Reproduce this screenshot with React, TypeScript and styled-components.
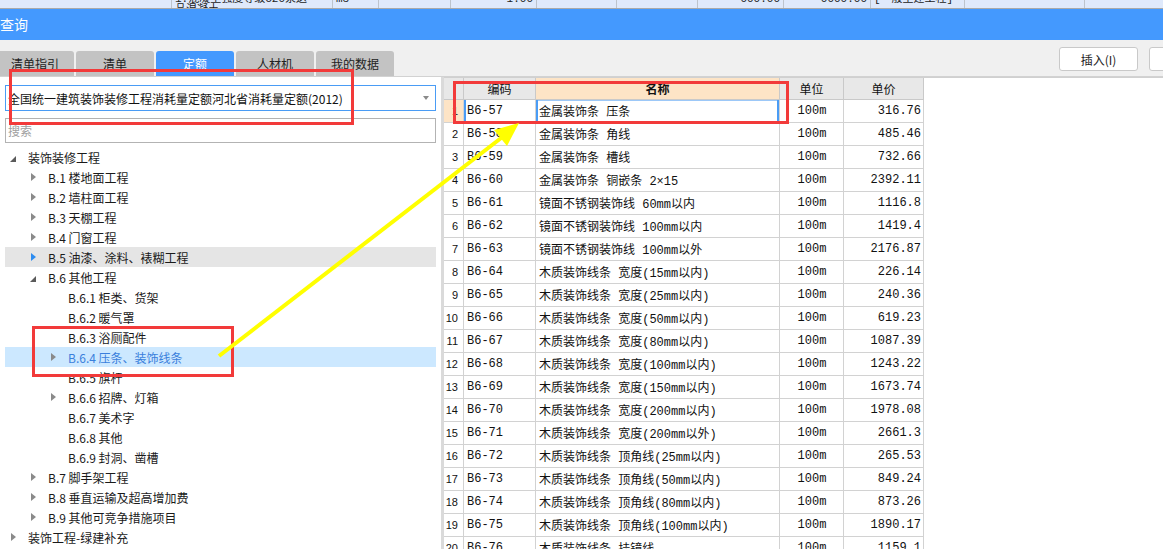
import React from 'react';
import styled, { createGlobalStyle } from 'styled-components';

type Twisty = 'open' | 'closed' | 'none';

type TreeItem = {
  level: number;
  label: string;
  twisty: Twisty;
  state?: 'hover' | 'selected';
};

type Quota = {
  code: string;
  name: string;
  unit: string;
  price: string;
};

const GlobalStyle = createGlobalStyle`
  html, body { margin: 0; padding: 0; background: #fff; }
  body { font-family: "Noto Sans CJK SC", sans-serif; }
  * { box-sizing: border-box; }
`;

const Screen = styled.div`
  position: relative;
  width: 1163px;
  height: 549px;
  overflow: hidden;
  display: flex;
  flex-direction: column;
  background: #fff;
  font-family: "Noto Sans CJK SC", sans-serif;
  font-size: 12px;
  color: #1a1a1a;
`;

/* strip of the grid behind the dialog */
const BackStrip = styled.div`
  height: 9px;
  flex-shrink: 0;
  display: flex;
  overflow: hidden;
  background: #dfe9fb;
  border-bottom: 1px solid #a9a9a9;
`;

const BackCell = styled.div<{ $w: number; $align?: string }>`
  width: ${(p) => p.$w}px;
  flex-shrink: 0;
  border-right: 1px solid #bcc3cc;
  padding: 0 3px;
  font-family: "Liberation Mono", "Noto Sans CJK SC", monospace;
  font-size: 11px;
  line-height: 11px;
  margin-top: -6px;
  text-align: ${(p) => p.$align || 'left'};
  white-space: nowrap;
  overflow: hidden;
  color: #222;
`;

const TitleBar = styled.div`
  height: 31px;
  flex-shrink: 0;
  display: flex;
  align-items: center;
  background: #4499fe;
  color: #fff;
  font-size: 14px;
  padding-bottom: 2px;
`;

const Toolbar = styled.div`
  height: 37px;
  flex-shrink: 0;
  display: flex;
  background: #f0f0f0;
  border-bottom: 1px solid #d2d2d2;
`;

const TabRow = styled.div`
  display: flex;
  gap: 2px;
  margin-left: -4px;
  align-self: flex-end;
`;

const Tab = styled.div<{ $active?: boolean }>`
  width: 78px;
  height: 25px;
  display: flex;
  align-items: center;
  justify-content: center;
  border-radius: 3px 3px 0 0;
  background: ${(p) => (p.$active ? '#4499fe' : '#c3c3c3')};
  color: ${(p) => (p.$active ? '#fff' : '#222')};
  font-size: 12px;
`;

const ButtonGroup = styled.div`
  margin-left: auto;
  width: 104px;
  margin-top: 7px;
  display: flex;
  gap: 11px;
  overflow: hidden;
  align-self: flex-start;
`;

const ToolButton = styled.div`
  width: 79px;
  height: 24px;
  flex-shrink: 0;
  display: flex;
  align-items: center;
  justify-content: center;
  background: #fff;
  border: 1px solid #c9c9c9;
  border-radius: 3px;
  font-size: 12px;
  color: #222;
`;

const Main = styled.div`
  flex: 1;
  min-height: 0;
  display: flex;
`;

const LeftPanel = styled.div`
  width: 441px;
  flex-shrink: 0;
  padding: 8px 5px 0 5px;
  display: flex;
  flex-direction: column;
`;

const Select = styled.div`
  width: 431px;
  height: 26px;
  flex-shrink: 0;
  display: flex;
  align-items: center;
  justify-content: space-between;
  padding: 0 6px 0 2px;
  border: 1px solid #4a9cf5;
  font-size: 12px;
  color: #111;
`;

const Caret = styled.span`
  width: 0;
  height: 0;
  border-style: solid;
  border-width: 4px 3.5px 0 3.5px;
  border-color: #8a8a8a transparent transparent transparent;
`;

const Search = styled.input`
  width: 431px;
  height: 25px;
  flex-shrink: 0;
  margin-top: 7px;
  border: 1px solid #b3b3b3;
  padding: 0 2px;
  outline: none;
  font-family: "Noto Sans CJK SC", sans-serif;
  font-size: 12px;
  &::placeholder {
    color: #a0a0a0;
  }
`;

const Tree = styled.div`
  margin-top: 4px;
  display: flex;
  flex-direction: column;
`;

const TreeRow = styled.div<{ $level: number; $state?: 'hover' | 'selected' }>`
  width: 431px;
  height: 20px;
  flex-shrink: 0;
  display: flex;
  align-items: center;
  padding-left: ${(p) => p.$level * 20}px;
  background: ${(p) =>
    p.$state === 'selected' ? '#cce8ff' : p.$state === 'hover' ? '#e5e5e5' : 'transparent'};
  color: ${(p) => (p.$state === 'selected' ? '#3a7fdc' : '#1a1a1a')};
  font-size: 12px;
  white-space: nowrap;
`;

const TwistyBox = styled.span`
  width: 16px;
  height: 20px;
  flex-shrink: 0;
  display: flex;
  align-items: center;
  justify-content: center;
`;

const Arrow = styled.span<{ $kind: Twisty; $blue?: boolean }>`
  width: 0;
  height: 0;
  border-style: solid;
  ${(p) =>
    p.$kind === 'open'
      ? 'border-width: 0 0 6px 6px; border-color: transparent transparent #5a5a5a transparent; margin-top: 3px;'
      : p.$kind === 'closed'
      ? `border-width: 4px 0 4px 5px; border-color: transparent transparent transparent ${
          p.$blue ? '#2d8cf0' : '#8a8a8a'
        };`
      : 'border-width: 0;'}
`;

const TreeLabel = styled.span`
  margin-left: 7px;
`;

const Splitter = styled.div`
  width: 3px;
  flex-shrink: 0;
  background: #dadada;
`;

const TablePanel = styled.div`
  flex: 1;
  border-top: 1px solid #d0d0d0;
  display: flex;
  flex-direction: column;
`;

const cols = '20px 72px 244px 64px 80px';

const HeadRow = styled.div`
  display: grid;
  grid-template-columns: ${cols};
  height: 22px;
  flex-shrink: 0;
`;

const HeadCell = styled.div<{ $active?: boolean }>`
  display: flex;
  align-items: center;
  justify-content: center;
  background: ${(p) => (p.$active ? '#fde4c6' : '#e8e8e8')};
  border-right: 1px solid #c9c9c9;
  border-bottom: 1px solid #c9c9c9;
  font-size: 12px;
  font-weight: ${(p) => (p.$active ? 700 : 400)};
  color: #111;
`;

const BodyRow = styled.div`
  display: grid;
  grid-template-columns: ${cols};
  height: 23px;
  flex-shrink: 0;
`;

const Cell = styled.div<{
  $align?: 'left' | 'center' | 'right';
  $bg?: string;
  $mark?: 'left' | 'box';
}>`
  display: flex;
  align-items: center;
  justify-content: ${(p) =>
    p.$align === 'right' ? 'flex-end' : p.$align === 'center' ? 'center' : 'flex-start'};
  padding: ${(p) => (p.$align === 'right' ? '0 2px 0 0' : '0 2px 0 3px')};
  background: ${(p) => p.$bg || '#fff'};
  border-right: 1px solid #d2d2d2;
  border-bottom: 1px solid #d2d2d2;
  font-family: "Liberation Mono", "Noto Sans CJK SC", monospace;
  font-size: 12px;
  color: #111;
  white-space: nowrap;
  overflow: hidden;
  ${(p) =>
    p.$mark === 'left'
      ? 'box-shadow: inset 2px 0 0 #4a9cf5;'
      : p.$mark === 'box'
      ? 'box-shadow: inset 2px 0 0 #4a9cf5, inset -2px 0 0 #4a9cf5, inset 0 1px 0 #9cc8f8, inset 0 -1px 0 #9cc8f8;'
      : ''}
`;

const NumCell = styled(Cell)`
  padding: 0 5px 0 0;
  font-family: "Liberation Sans", sans-serif;
  font-size: 11px;
`;

const Annotation = styled.div<{ $x: number; $y: number; $w: number; $h: number }>`
  position: absolute;
  left: ${(p) => p.$x}px;
  top: ${(p) => p.$y}px;
  width: ${(p) => p.$w}px;
  height: ${(p) => p.$h}px;
  border: 3px solid #f23a3a;
  pointer-events: none;
`;

const Overlay = styled.svg`
  position: absolute;
  left: 0;
  top: 0;
  pointer-events: none;
`;

const tree: TreeItem[] = [
  { level: 0, label: '装饰装修工程', twisty: 'open' },
  { level: 1, label: 'B.1 楼地面工程', twisty: 'closed' },
  { level: 1, label: 'B.2 墙柱面工程', twisty: 'closed' },
  { level: 1, label: 'B.3 天棚工程', twisty: 'closed' },
  { level: 1, label: 'B.4 门窗工程', twisty: 'closed' },
  { level: 1, label: 'B.5 油漆、涂料、裱糊工程', twisty: 'closed', state: 'hover' },
  { level: 1, label: 'B.6 其他工程', twisty: 'open' },
  { level: 2, label: 'B.6.1 柜类、货架', twisty: 'none' },
  { level: 2, label: 'B.6.2 暖气罩', twisty: 'none' },
  { level: 2, label: 'B.6.3 浴厕配件', twisty: 'none' },
  { level: 2, label: 'B.6.4 压条、装饰线条', twisty: 'closed', state: 'selected' },
  { level: 2, label: 'B.6.5 旗杆', twisty: 'none' },
  { level: 2, label: 'B.6.6 招牌、灯箱', twisty: 'closed' },
  { level: 2, label: 'B.6.7 美术字', twisty: 'none' },
  { level: 2, label: 'B.6.8 其他', twisty: 'none' },
  { level: 2, label: 'B.6.9 封洞、凿槽', twisty: 'none' },
  { level: 1, label: 'B.7 脚手架工程', twisty: 'closed' },
  { level: 1, label: 'B.8 垂直运输及超高增加费', twisty: 'closed' },
  { level: 1, label: 'B.9 其他可竞争措施项目', twisty: 'closed' },
  { level: 0, label: '装饰工程-绿建补充', twisty: 'closed' },
];

const quotas: Quota[] = [
  { code: 'B6-57', name: '金属装饰条 压条', unit: '100m', price: '316.76' },
  { code: 'B6-58', name: '金属装饰条 角线', unit: '100m', price: '485.46' },
  { code: 'B6-59', name: '金属装饰条 槽线', unit: '100m', price: '732.66' },
  { code: 'B6-60', name: '金属装饰条 铜嵌条 2×15', unit: '100m', price: '2392.11' },
  { code: 'B6-61', name: '镜面不锈钢装饰线 60mm以内', unit: '100m', price: '1116.8' },
  { code: 'B6-62', name: '镜面不锈钢装饰线 100mm以内', unit: '100m', price: '1419.4' },
  { code: 'B6-63', name: '镜面不锈钢装饰线 100mm以外', unit: '100m', price: '2176.87' },
  { code: 'B6-64', name: '木质装饰线条 宽度(15mm以内)', unit: '100m', price: '226.14' },
  { code: 'B6-65', name: '木质装饰线条 宽度(25mm以内)', unit: '100m', price: '240.36' },
  { code: 'B6-66', name: '木质装饰线条 宽度(50mm以内)', unit: '100m', price: '619.23' },
  { code: 'B6-67', name: '木质装饰线条 宽度(80mm以内)', unit: '100m', price: '1087.39' },
  { code: 'B6-68', name: '木质装饰线条 宽度(100mm以内)', unit: '100m', price: '1243.22' },
  { code: 'B6-69', name: '木质装饰线条 宽度(150mm以内)', unit: '100m', price: '1673.74' },
  { code: 'B6-70', name: '木质装饰线条 宽度(200mm以内)', unit: '100m', price: '1978.08' },
  { code: 'B6-71', name: '木质装饰线条 宽度(200mm以外)', unit: '100m', price: '2661.3' },
  { code: 'B6-72', name: '木质装饰线条 顶角线(25mm以内)', unit: '100m', price: '265.53' },
  { code: 'B6-73', name: '木质装饰线条 顶角线(50mm以内)', unit: '100m', price: '849.24' },
  { code: 'B6-74', name: '木质装饰线条 顶角线(80mm以内)', unit: '100m', price: '873.26' },
  { code: 'B6-75', name: '木质装饰线条 顶角线(100mm以内)', unit: '100m', price: '1890.17' },
  { code: 'B6-76', name: '木质装饰线条 挂镜线', unit: '100m', price: '1159.1' },
];

const tabs = ['清单指引', '清单', '定额', '人材机', '我的数据'];

const PEACH = '#fde4c6';

const App = () => {
  return (
    <Screen>
      <GlobalStyle />
      <BackStrip>
        <BackCell $w={172} />
        <BackCell $w={161}>
          1.混凝土强度等级C20泵送
          <br />
          品混凝土
        </BackCell>
        <BackCell $w={46}>m3</BackCell>
        <BackCell $w={72} />
        <BackCell $w={86} $align="right">1.00</BackCell>
        <BackCell $w={80} />
        <BackCell $w={81} />
        <BackCell $w={86} $align="right">000.00</BackCell>
        <BackCell $w={87} $align="right">0000.00</BackCell>
        <BackCell $w={94}>[一般土建工程]</BackCell>
        <BackCell $w={120} />
        <BackCell $w={100} />
      </BackStrip>

      <TitleBar>查询</TitleBar>

      <Toolbar>
        <TabRow>
          {tabs.map((t) => (
            <Tab key={t} $active={t === '定额'}>
              {t}
            </Tab>
          ))}
        </TabRow>
        <ButtonGroup>
          <ToolButton>插入(I)</ToolButton>
          <ToolButton>替换(R)</ToolButton>
        </ButtonGroup>
      </Toolbar>

      <Main>
        <LeftPanel>
          <Select>
            <span>全国统一建筑装饰装修工程消耗量定额河北省消耗量定额(2012)</span>
            <Caret />
          </Select>
          <Search placeholder="搜索" readOnly />
          <Tree>
            {tree.map((item) => (
              <TreeRow key={item.label} $level={item.level} $state={item.state}>
                <TwistyBox>
                  <Arrow $kind={item.twisty} $blue={item.state === 'hover'} />
                </TwistyBox>
                <TreeLabel>{item.label}</TreeLabel>
              </TreeRow>
            ))}
          </Tree>
        </LeftPanel>

        <Splitter />

        <TablePanel>
          <HeadRow>
            <HeadCell />
            <HeadCell>编码</HeadCell>
            <HeadCell $active>名称</HeadCell>
            <HeadCell>单位</HeadCell>
            <HeadCell>单价</HeadCell>
          </HeadRow>
          {quotas.map((q, i) => {
            const current = i === 0;
            return (
              <BodyRow key={q.code}>
                <NumCell $align="right" $bg={current ? PEACH : undefined}>
                  {i + 1}
                </NumCell>
                <Cell $mark={current ? 'left' : undefined}>{q.code}</Cell>
                <Cell $mark={current ? 'box' : undefined}>{q.name}</Cell>
                <Cell $align="center">{q.unit}</Cell>
                <Cell $align="right">{q.price}</Cell>
              </BodyRow>
            );
          })}
        </TablePanel>
      </Main>

      <Annotation $x={9} $y={69} $w={345} $h={56} />
      <Annotation $x={453} $y={81} $w={336} $h={43} />
      <Annotation $x={32} $y={326} $w={202} $h={51} />

      <Overlay width={1163} height={549} viewBox="0 0 1163 549">
        <line x1={219} y1={356} x2={505} y2={135} stroke="#ffff00" strokeWidth={4} />
        <polygon points="519,123 494,130 507,146" fill="#ffff00" />
      </Overlay>
    </Screen>
  );
};

export default App;
